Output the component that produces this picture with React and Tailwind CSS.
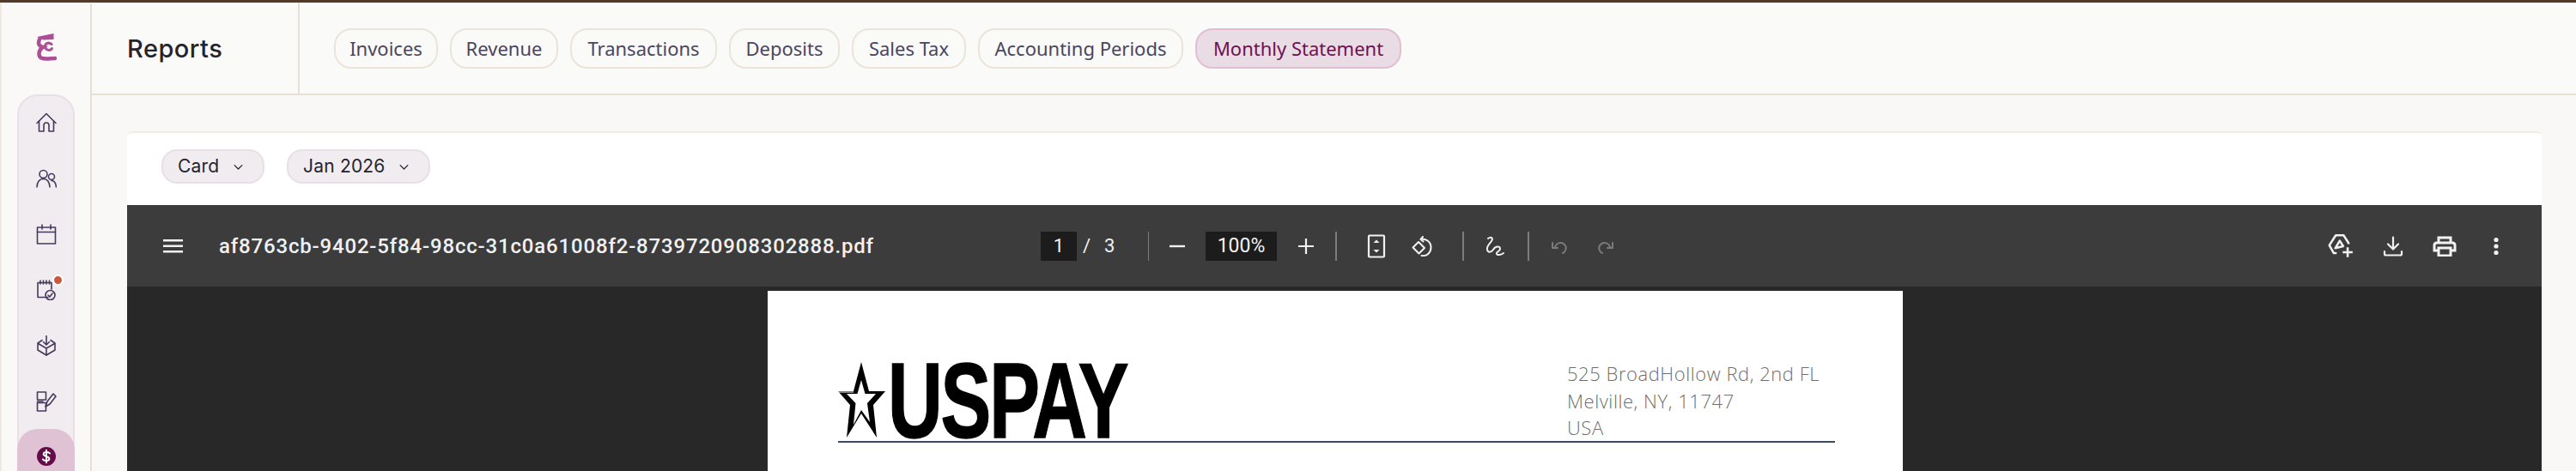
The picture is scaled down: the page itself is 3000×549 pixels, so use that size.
const tabs = [
  ["Invoices", "w-[121px]"],
  ["Revenue", "w-[126px]"],
  ["Transactions", "w-[171px]"],
  ["Deposits", "w-[129px]"],
  ["Sales Tax", "w-[133px]"],
  ["Accounting Periods", "w-[239px]"],
];

const S = ({ size = 24, children, className = "", vb = 24, sw = 1.6 }) => (
  <svg width={size} height={size} viewBox={`0 0 ${vb} ${vb}`} fill="none" stroke="currentColor" strokeWidth={sw} strokeLinejoin="round" strokeLinecap="round" className={className}>
    {children}
  </svg>
);

const Logo = () => (
  <svg width="24" height="34" viewBox="0 0 24 34" fill="none" stroke="#ac4f97" strokeLinecap="round">
    <path d="M1 5 L20.5 1 V8 L8 8.5 Z" fill="#ac4f97" stroke="none" />
    <path d="M4 8 C2 12 3 16 8 17 C3 20 2 27 6 29.5 C10 31.5 16 30 22 30" strokeWidth="4.5" />
    <path d="M18 13.5 C14 10.5 10 13 10.5 17 C12 21 17 21.5 18.5 18.5" strokeWidth="3" />
  </svg>
);

const icons = [
  <S key="h"><path d="M1 12.5 L12 1.5 L23 12.5" /><path d="M3.5 10 V22 H9 V15 a3 3 0 0 1 6 0 V22 H20.5 V10" /></S>,
  <S key="u"><circle cx="8.5" cy="7" r="4.5" /><path d="M1 22 C1.5 15 5 12.5 8.5 12.5 C12 12.5 15.5 15 16 22" /><circle cx="18" cy="10" r="3.5" /><path d="M18 14.5 C21 14.5 23 17.5 23.5 22" /></S>,
  <S key="c"><rect x="1.5" y="4" width="21" height="19" /><path d="M1.5 9.5 H22.5 M7 1 V6 M17 1 V6" /></S>,
  <div key="cc" className="relative flex h-6 w-6 items-center justify-center">
    <S><path d="M14 20.5 H2 V3.5 H18 V11" /><path d="M5 1 V5 M8.5 1 V5 M12 1 V5 M15.5 1 V5" /><circle cx="16.5" cy="18" r="5.5" /><path d="M14 18 L16 20 L19 16" /></S>
    <span className="absolute -right-[8px] -top-[6px] h-[13px] w-[13px] rounded-full border-2 border-white bg-[#c9583f]" />
  </div>,
  <S key="b"><path d="M7 5.5 L2 9 V17 L12 23 L22 17 V9 L17 5.5" /><path d="M2.5 9.5 L12 15 L21.5 9.5 M12 15 V23 M12 0.5 V11 M8.5 7.5 L12 11 L15.5 7.5" /></S>,
  <S key="e"><rect x="1.5" y="1" width="10" height="9" /><rect x="1.5" y="13.5" width="10" height="9.5" /><path d="M1.5 12 H8" /><path d="M11 18 L13 12 L20 3 L23 6 L16 15 Z" /></S>,
];

const Sidebar = () => (
  <aside className="mt-[1px] flex w-[105px] shrink-0 flex-col items-center overflow-hidden border-r-2 border-[#e8e0d4] bg-[#fbf9f7]">
    <div className="flex h-[106px] w-full shrink-0 items-center justify-center pb-[4px]"><Logo /></div>
    <div className="h-[600px] w-[67px] shrink-0 rounded-[24px] border-2 border-[#e9dfe7] bg-[#f1ecf0]">
      <div className="-mx-[2px] -mt-[2px] flex flex-col">
        {icons.map((ic, i) => (
          <div key={i} className="flex h-[65px] items-center justify-center text-[#453a5c]">{ic}</div>
        ))}
        <div className="flex h-[100px] items-start justify-center rounded-[24px] bg-[#e0c2d5] pt-[20px]">
          <svg width="24" height="24" viewBox="0 0 24 24"><circle cx="12" cy="12" r="11" fill="#660a4a" /><path d="M16 8.5 C15 6.8 9 6.2 8.7 9.3 C8.5 12.6 15.6 11.2 15.4 14.8 C15.1 17.8 9 17.2 8 15.4 M12 4.8 V19.2" fill="none" stroke="#fff" strokeWidth="2" strokeLinecap="round" /></svg>
        </div>
      </div>
    </div>
  </aside>
);

const Header = () => (
  <header className="flex h-[108px] shrink-0 border-b-2 border-[#e8e0d4] bg-[#fafaf8]">
    <div className="flex w-[242px] items-center border-r-2 border-[#e8e0d4] pl-[41px] pt-[1px] font-['Inter',sans-serif] text-[29px] font-medium tracking-[0.5px] text-[#25242e]">Reports</div>
    <nav className="flex items-center gap-[14px] pl-[40px] font-['Noto_Sans',sans-serif] text-[22px]">
      {tabs.map(([t, w]) => (
        <div key={t} className={`flex h-[47px] items-center justify-center rounded-[20px] border-2 border-[#ece4d8] text-[#4a4560] ${w}`}>{t}</div>
      ))}
      <div className="flex h-[47px] w-[240px] items-center justify-center rounded-[20px] border-2 border-[#e0bfd3] bg-[#e9dce5] text-[#70114f]">Monthly Statement</div>
    </nav>
  </header>
);

const Pill = ({ label, w }) => (
  <div className={`flex h-[40px] items-center justify-between rounded-[18px] border-2 border-[#e9dfe6] bg-[#f1ecf0] pl-[17px] pr-[21px] font-['Inter',sans-serif] text-[21px] tracking-[0.2px] text-[#25242e] ${w}`}>
    {label}
    <S size={15} sw={2}><path d="M5 9 L12 16 L19 9" /></S>
  </div>
);

const Sep = ({ ml, w = "w-[2px]" }) => <div className={`h-[34px] ${w} bg-[#7c7c7c] ${ml}`} />;

const Toolbar = () => (
  <div className="flex h-[95px] shrink-0 items-center bg-[#3c3c3c] font-['Roboto',sans-serif] text-[#f1f1f1]">
    <div className="flex w-[1064px] shrink-0 items-center pl-[42px]">
      <svg width="23" height="16" viewBox="0 0 23 16" fill="#f1f1f1"><rect width="23" height="2.5" /><rect y="6.5" width="23" height="2.5" /><rect y="13" width="23" height="2.5" /></svg>
      <span className="ml-[42px] text-[24px] font-medium tracking-[0.82px]">af8763cb-9402-5f84-98cc-31c0a61008f2-8739720908302888.pdf</span>
    </div>
    <div className="flex h-[34px] w-[42px] items-center justify-center bg-[#1c1c1c] text-[22px]">1</div>
    <div className="flex w-[83px] items-center gap-[16px] pl-[7px] text-[22px]"><span>/</span><span>3</span></div>
    <Sep w="w-[1px]" ml="" />
    <div className="ml-[21px] flex h-6 w-6 items-center justify-center"><S size={24} sw={2.4}><path d="M3 12 H21" strokeLinecap="butt" /></S></div>
    <div className="ml-[21px] flex h-[34px] w-[83px] items-center justify-center bg-[#1c1c1c] pt-[1px] text-[23px]">100%</div>
    <div className="ml-[22px] flex h-6 w-6 items-center justify-center"><S size={24} sw={2.2}><path d="M3 12 H21 M12 3 V21" strokeLinecap="butt" /></S></div>
    <Sep ml="ml-[22px]" />
    <div className="ml-[34px] flex h-6 w-6 items-center justify-center"><svg width="24" height="28" viewBox="0 0 24 28" fill="none" stroke="currentColor" strokeWidth="2.2"><rect x="3" y="1.5" width="18" height="25" rx="1" /><path d="M8.5 10 L12 6.5 L15.5 10 Z M8.5 18 L12 21.5 L15.5 18 Z" fill="currentColor" stroke="none" /></svg></div>
    <div className="ml-[29px] h-6 w-6"><S sw={2}><path d="M8 7 L15 14 L8.5 20.5 L1.5 13.5 Z" /><path d="M13 1 L10.5 4 L13.5 6.5 M10.5 4 C16 2.5 22.5 6.5 22.5 13.5 C22.5 19 18 24 11.5 23" /></S></div>
    <Sep ml="ml-[35px]" />
    <div className="ml-[23px] h-6 w-6"><S sw={2}><path d="M5 3 C9 0 11 3 9 6 C7 9 3 12 4 16 C5 20 9 19 11 16 C13 12 19 11 19 15 C19 19 14 18 15 21 C16 23 20 22 23 20" /></S></div>
    <Sep ml="ml-[27px]" />
    <div className="ml-[23px] h-6 w-6 text-[#7b7b7b]"><S sw={2}><path d="M7 13 C9 7 15 7 18 10 C21 13 20 18 16 20 M4 8 V14 H10" /></S></div>
    <div className="ml-[30px] h-6 w-6 text-[#7b7b7b]"><S sw={2}><path d="M17 13 C15 7 9 7 6 10 C3 13 4 18 8 20 M20 8 V14 H14" /></S></div>
    <div className="ml-auto flex items-center gap-[34px] pr-[41px]">
      <S sw={2.2} vb={26} size={30}><path d="M8 20 H6 L1.5 12 L8 2 H16 L21 10" /><path d="M7.5 15 L12 7.5 L15.5 13 Z" /><path d="M20 14 V24 M15 19 H25" strokeLinecap="butt" /></S>
      <S sw={2.2}><path d="M12 1.5 V15 M6 9.5 L12 15.5 L18 9.5" /><path d="M2 18 V21 C2 22 3 22.5 4 22.5 H20 C21 22.5 22 22 22 21 V18" /></S>
      <svg width="28" height="24" viewBox="0 0 28 24" fill="none" stroke="#f1f1f1" strokeWidth="3"><path d="M7 8 V2 H21 V8" /><path d="M7 17 H2 V11 C2 9 3 8 5 8 H23 C25 8 26 9 26 11 V17 H21" /><rect x="7" y="14" width="14" height="9" /></svg>
      <svg width="24" height="24" viewBox="0 0 24 24" fill="#f1f1f1"><circle cx="12" cy="4.5" r="2.6" /><circle cx="12" cy="12" r="2.6" /><circle cx="12" cy="19.5" r="2.6" /></svg>
    </div>
  </div>
);

const Star = () => (
  <svg width="55" height="88" viewBox="0 0 55 88" className="shrink-0">
    <path d="M27 0 L36 34 H55 L41 50 L45 88 L27 60 L10 88 L14 50 L0 34 H18 Z" fill="#000" />
    <path d="M27 21 L31.5 37 L44 37 L34 48 L37 70 L27 56 L18 73 L20.5 48 L10 37 L22.5 37 Z" fill="#fff" />
    <path d="M0 35 H18" stroke="#fff" strokeWidth="1" />
  </svg>
);

const Paper = () => (
  <div className="flex flex-1 justify-center overflow-hidden bg-[#282828] pl-[2px] pt-[5px]">
    <div className="h-[400px] w-[1322px] shrink-0 bg-white pl-[82px] pr-[79px] pt-[81px]">
      <div className="flex h-[96px] items-start justify-between border-b-2 border-[#3c4a60]">
        <div className="flex items-start gap-[3px] pt-[2px]">
          <Star />
          <div className="h-[90px] w-[278px]">
            <span className="inline-block origin-top-left scale-x-[0.705] font-['Liberation_Sans',sans-serif] text-[125px] font-bold leading-[90px] tracking-[-3px] text-black [-webkit-text-stroke:1.5px_black]">USPAY</span>
          </div>
        </div>
        <div className="mr-[16px] w-[296px] whitespace-nowrap font-['Open_Sans',sans-serif] text-[22px] font-light leading-[31.5px] tracking-[0.55px] text-[#6f6f6f]">
          <div>525 BroadHollow Rd, 2nd FL</div>
          <div>Melville, NY, 11747</div>
          <div>USA</div>
        </div>
      </div>
    </div>
  </div>
);

export default function App() {
  return (
    <div className="flex h-[549px] w-[3000px] flex-col overflow-hidden bg-[#f9f8f6]">
      <div className="h-[3px] shrink-0 bg-[#4f3a2c]" />
      <div className="flex min-h-0 flex-1">
        <div className="w-[2px] shrink-0 bg-[#efe9df]" />
        <Sidebar />
        <main className="flex min-w-0 flex-1 flex-col">
          <Header />
          <div className="flex min-h-0 flex-1 flex-col pl-[41px] pr-[40px] pt-[42px]">
            <section className="flex min-h-0 flex-1 flex-col rounded-t-[6px] border-t-2 border-[#f1ece3] bg-white">
              <div className="flex h-[84px] shrink-0 items-center gap-[26px] pb-[6px] pl-[40px]">
                <Pill label="Card" w="w-[120px]" />
                <Pill label="Jan 2026" w="w-[167px]" />
              </div>
              <Toolbar />
              <Paper />
            </section>
          </div>
        </main>
      </div>
    </div>
  );
}
